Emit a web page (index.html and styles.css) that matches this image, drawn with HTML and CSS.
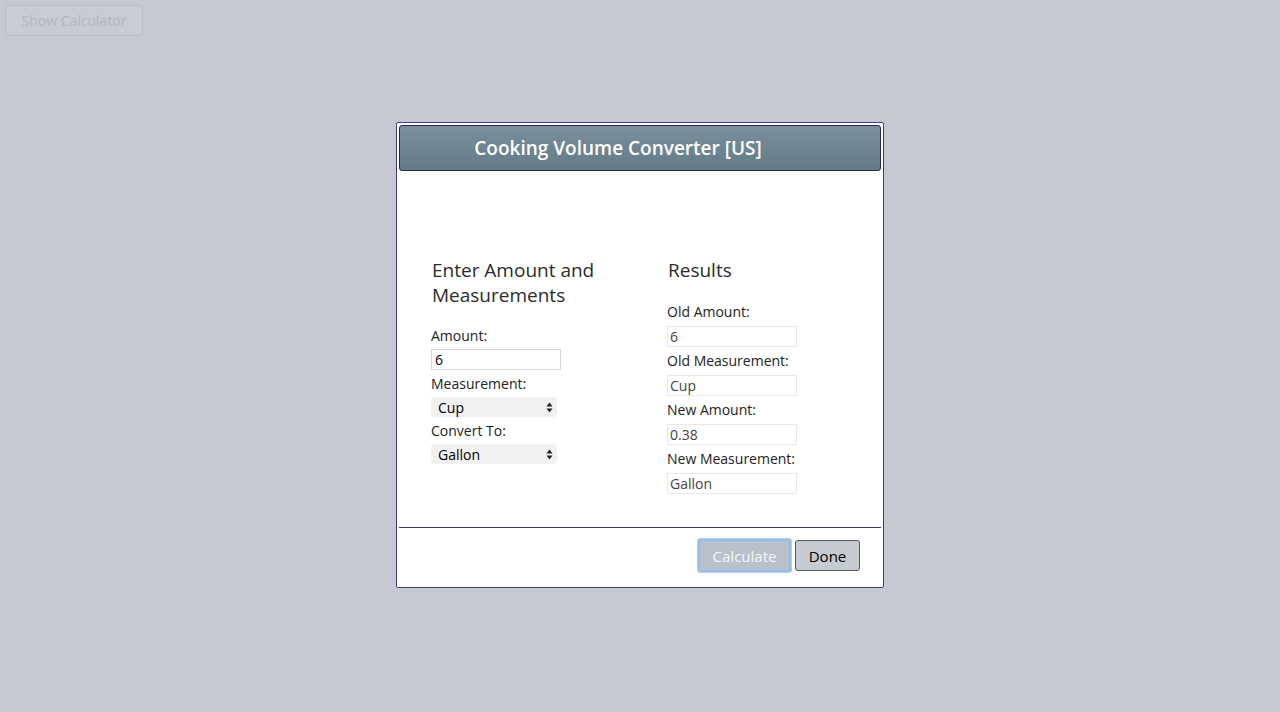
FILE: index.html
```html
<!DOCTYPE html>
<html lang="en">
<head>
<meta charset="utf-8">
<title>Cooking Volume Converter</title>
<link rel="stylesheet" href="styles.css">
</head>
<body>
  <button class="show-btn" disabled>Show Calculator</button>

  <div class="overlay">
    <div class="dialog">
      <div class="dialog-header">Cooking Volume Converter [US]</div>
      <div class="dialog-body">
        <div class="col col-left">
          <h2 class="col-title">Enter Amount and Measurements</h2>
          <label class="lbl" for="amount">Amount:</label>
          <input class="inp" id="amount" type="text" value="6">
          <label class="lbl" for="from">Measurement:</label>
          <div class="sel-wrap">
            <select class="sel" id="from">
              <option>Cup</option>
            </select>
            <svg class="sel-arrow" width="7" height="11" viewBox="0 0 7 11"><path d="M3.5 0.5 L6.5 4.5 L0.5 4.5 Z M0.5 6.5 L6.5 6.5 L3.5 10.5 Z" fill="#222"/></svg>
          </div>
          <label class="lbl" for="to">Convert To:</label>
          <div class="sel-wrap">
            <select class="sel" id="to">
              <option>Gallon</option>
            </select>
            <svg class="sel-arrow" width="7" height="11" viewBox="0 0 7 11"><path d="M3.5 0.5 L6.5 4.5 L0.5 4.5 Z M0.5 6.5 L6.5 6.5 L3.5 10.5 Z" fill="#222"/></svg>
          </div>
        </div>
        <div class="col col-right">
          <h2 class="col-title">Results</h2>
          <div class="lbl">Old Amount:</div>
          <div class="out">6</div>
          <div class="lbl">Old Measurement:</div>
          <div class="out">Cup</div>
          <div class="lbl">New Amount:</div>
          <div class="out">0.38</div>
          <div class="lbl">New Measurement:</div>
          <div class="out">Gallon</div>
        </div>
      </div>
      <div class="dialog-footer">
        <button class="btn btn-calc" disabled>Calculate</button>
        <button class="btn btn-done">Done</button>
      </div>
    </div>
  </div>
</body>
</html>
```

FILE: styles.css
```css
html, body {
  margin: 0;
  padding: 0;
  height: 100%;
}

body {
  background: #c5c9d1;
  font-family: "Open Sans", "DejaVu Sans", sans-serif;
  color: #222;
}

.show-btn {
  display: block;
  margin: 5px 0 0 5px;
  width: 138px;
  height: 31px;
  font-family: "Open Sans", sans-serif;
  font-size: 14px;
  color: #b2b6be;
  background: #c8cbd3;
  border: 1px solid #b9bdc5;
  border-radius: 3px;
  padding: 0;
}

.overlay {
  position: fixed;
  inset: 0;
  display: flex;
  align-items: flex-start;
  justify-content: center;
  padding-top: 122px;
}

.dialog {
  width: 482px;
  height: 460px;
  background: #fff;
  border: 1px solid #3d3b86;
  border-radius: 2px;
  padding: 2px;
  box-sizing: content-box;
  display: flex;
  flex-direction: column;
}

.dialog-header {
  flex: none;
  height: 44px;
  border: 1px solid #262a4c;
  border-radius: 3px;
  background: linear-gradient(#7a909d, #627b87);
  color: #fff;
  font-weight: 600;
  font-size: 19px;
  line-height: 44px;
  padding-right: 44px;
  text-align: center;
}

.dialog-body {
  flex: none;
  box-sizing: border-box;
  height: 357px;
  display: flex;
  padding: 87px 0 0 32px;
  border-bottom: 1px solid #3d3b70;
}

.col {
  display: flex;
  flex-direction: column;
  align-items: flex-start;
}

.col-left {
  width: 236px;
}

.col-title {
  margin: 0 0 17px 1px;
  font-size: 19px;
  font-weight: 400;
  line-height: 25px;
  color: #2b2b2b;
  width: 190px;
}

.col-left .col-title {
  margin-bottom: 16px;
}

.lbl {
  display: block;
  font-size: 14px;
  line-height: 24px;
  color: #222;
  margin-bottom: 2px;
}

.col-left .lbl {
  margin-bottom: 1px;
}

.inp {
  box-sizing: border-box;
  width: 130px;
  height: 21px;
  margin: 0 0 2px 0;
  border: 1px solid #d8d8d8;
  padding: 0 3px;
  font-family: "Open Sans", sans-serif;
  font-size: 14px;
  color: #000;
  outline: none;
}

.sel-wrap {
  position: relative;
  width: 126px;
  height: 20px;
  margin-bottom: 2px;
}

.sel {
  display: block;
  appearance: none;
  -webkit-appearance: none;
  box-sizing: border-box;
  width: 100%;
  height: 100%;
  margin: 0;
  border: none;
  border-radius: 4px;
  background: #f1f1f1;
  padding: 0 0 0 7px;
  font-family: "Open Sans", sans-serif;
  font-size: 14px;
  color: #000;
}

.sel-arrow {
  position: absolute;
  right: 4px;
  top: 5px;
  pointer-events: none;
}

.out {
  box-sizing: border-box;
  width: 130px;
  height: 21px;
  margin-bottom: 2px;
  border: 1px solid #e8e8e8;
  padding: 0 2px;
  font-size: 14px;
  line-height: 19px;
  color: #444;
}

.dialog-footer {
  flex: none;
  height: 57px;
  display: flex;
  align-items: center;
  justify-content: flex-end;
  gap: 3px;
  padding-right: 21px;
  padding-bottom: 2px;
  box-sizing: border-box;
}

.btn {
  font-family: "Open Sans", sans-serif;
  font-size: 15px;
  border-radius: 3px;
  padding: 0;
}

.btn-calc {
  width: 95px;
  height: 35px;
  background: #b9c1cd;
  color: #f4f6f9;
  border: 1px solid #c4cad4;
  box-shadow: 0 0 0 2px #8fc0f4 inset;
}

.btn-done {
  width: 65px;
  height: 31px;
  background: #c6cad1;
  color: #000;
  border: 1px solid #555a60;
}
```
